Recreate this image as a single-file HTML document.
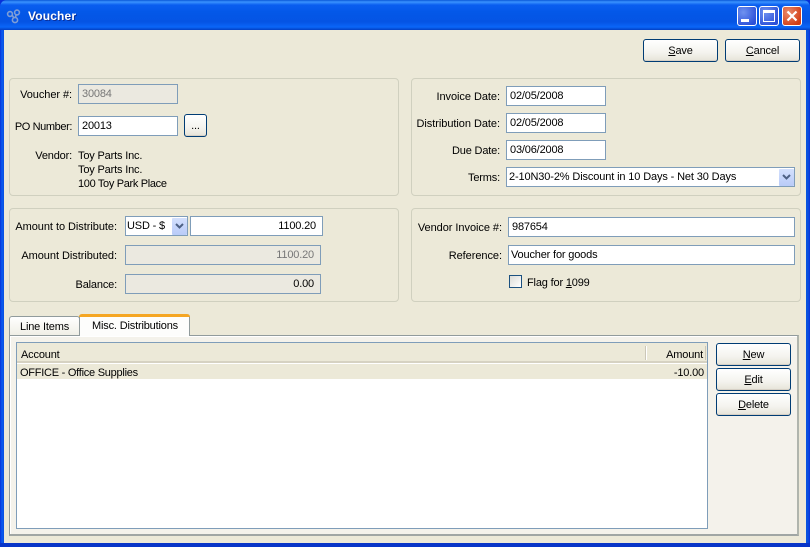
<!DOCTYPE html>
<html>
<head>
<meta charset="utf-8">
<style>
html,body{margin:0;padding:0;width:810px;height:547px;overflow:hidden;background:#0831d9}
*{box-sizing:border-box}
body{font-family:"Liberation Sans",sans-serif;font-size:11px;letter-spacing:-.17px;color:#000;position:relative}
.a{position:absolute}
#win{position:absolute;left:0;top:0;width:810px;height:547px;background:linear-gradient(90deg,#0831d9 0,#0a5cf0 2px,#0a4fe0 4px,#0855dd 806px,#0a4fe0 808px,#0831d9 810px);border-radius:7px 7px 0 0;overflow:hidden}
#title{position:absolute;left:0;top:0;width:810px;height:30px;background:linear-gradient(180deg,#0a58d8 0,#3a93ff 2px,#0a5ef0 5px,#0458e8 12px,#0554e4 22px,#0a66f8 27px,#0340c4 30px)}
#client{position:absolute;left:4px;top:30px;width:802px;height:513px;background:#ece9d8}
#bot{position:absolute;left:0;top:543px;width:810px;height:4px;background:#0835c8}
.t{position:absolute;white-space:nowrap;line-height:13px;height:13px;margin-top:1px}
.r{text-align:right}
.w{letter-spacing:-.05px}
.group{position:absolute;border:1px solid #d0d0bf;border-radius:4px}
.inp{position:absolute;background:#fff;border:1px solid #7f9db9;line-height:19px;height:20px;padding:0 3px;white-space:nowrap}
.dis{background:#ebe9e0;color:#777}
.right{text-align:right;padding-right:6px}
.btn{position:absolute;border:1px solid #003c74;border-radius:3px;background:linear-gradient(180deg,#fff 0,#f4f3ee 60%,#e6e3d8 100%);text-align:center;line-height:23px;box-shadow:inset 0 -1px 0 #d6d0c5}
u{text-decoration:underline}
.arrow{position:absolute;background:linear-gradient(180deg,#d3e0fd,#b9cbf8);border-radius:1px}
.cap{position:absolute;top:6px;width:20px;height:20px;border:1px solid #fff;border-radius:3px;background:radial-gradient(circle at 30% 30%,#6f92f0,#2c50d8 80%)}
</style>
</head>
<body>
<div id="win">
  <div id="title"></div>
  <svg class="a" style="left:6px;top:9px" width="16" height="15" viewBox="0 0 16 15" fill="none" stroke="#7f9ed6" stroke-width="1.6"><circle cx="4" cy="5" r="2.4"/><circle cx="11" cy="3.500" r="2.400"/><circle cx="9" cy="11" r="2.600"/><path d="M6 6l2 3M10 6l-.5 2.500"/></svg>
  <div class="t" style="left:28px;top:9px;color:#fff;font-weight:bold;font-size:12px;letter-spacing:.15px;text-shadow:1px 1px 0 #0a2f9a">Voucher</div>

  <div class="cap" style="left:737px"><div class="a" style="left:3px;top:12px;width:8px;height:3px;background:#fff"></div></div>
  <div class="cap" style="left:759px"><div class="a" style="left:3px;top:3px;width:12px;height:12px;border:1px solid #fff;border-top-width:3px"></div></div>
  <div class="cap" style="left:782px;background:radial-gradient(circle at 30% 30%,#e88a6c,#d33c14 80%)"><svg class="a" style="left:3px;top:3px" width="12" height="12" viewBox="0 0 12 12"><path d="M1.500 1.500l9 9M10.500 1.500l-9 9" stroke="#fff" stroke-width="2.200"/></svg></div>

  <div id="client"></div>
  <div id="bot"></div>

  <div class="btn" style="left:643px;top:39px;width:75px;height:23px"><u>S</u>ave</div>
  <div class="btn" style="left:725px;top:39px;width:75px;height:23px"><u>C</u>ancel</div>

  <div class="group" style="left:9px;top:78px;width:390px;height:118px"></div>
  <div class="group" style="left:411px;top:78px;width:390px;height:118px"></div>
  <div class="group" style="left:9px;top:208px;width:390px;height:94px"></div>
  <div class="group" style="left:411px;top:208px;width:390px;height:94px"></div>

  <div class="t r" style="left:9px;width:63px;top:88px;letter-spacing:-.07px">Voucher #:</div>
  <div class="inp dis" style="left:78px;top:84px;width:100px">30084</div>
  <div class="t r" style="left:9px;width:63px;top:120px;letter-spacing:-.4px">PO Number:</div>
  <div class="inp" style="left:78px;top:116px;width:100px">20013</div>
  <div class="btn" style="left:184px;top:114px;width:23px;height:23px;border-radius:3px;line-height:22px">...</div>
  <div class="t r" style="left:9px;width:63px;top:149px">Vendor:</div>
  <div class="t" style="left:78px;top:149px">Toy Parts Inc.</div>
  <div class="t" style="left:78px;top:163px">Toy Parts Inc.</div>
  <div class="t" style="left:78px;top:177px;letter-spacing:-.33px">100 Toy Park Place</div>

  <div class="t r w" style="left:411px;width:89px;top:90px">Invoice Date:</div>
  <div class="inp" style="left:506px;top:86px;width:100px">02/05/2008</div>
  <div class="t r w" style="left:411px;width:89px;top:117px">Distribution Date:</div>
  <div class="inp" style="left:506px;top:113px;width:100px">02/05/2008</div>
  <div class="t r" style="left:411px;width:89px;top:144px">Due Date:</div>
  <div class="inp" style="left:506px;top:140px;width:100px">03/06/2008</div>
  <div class="t r" style="left:411px;width:89px;top:171px">Terms:</div>
  <div class="inp" style="left:506px;top:167px;width:289px;padding-left:2px;letter-spacing:-.13px">2-10N30-2% Discount in 10 Days - Net 30 Days</div>
  <div class="arrow" style="left:779px;top:169px;width:15px;height:17px"><svg class="a" style="left:3px;top:5px" width="9" height="7" viewBox="0 0 9 7"><path d="M1 1l3.500 3.500L8 1" fill="none" stroke="#4d6185" stroke-width="2"/></svg></div>

  <div class="t r w" style="left:9px;width:108px;top:220px">Amount to Distribute:</div>
  <div class="inp" style="left:125px;top:216px;width:63px;padding-left:1px">USD - $</div>
  <div class="arrow" style="left:172px;top:218px;width:15px;height:17px"><svg class="a" style="left:3px;top:5px" width="9" height="7" viewBox="0 0 9 7"><path d="M1 1l3.500 3.500L8 1" fill="none" stroke="#4d6185" stroke-width="2"/></svg></div>
  <div class="inp right" style="left:190px;top:216px;width:133px">1100.20</div>
  <div class="t r w" style="left:9px;width:108px;top:249px">Amount Distributed:</div>
  <div class="inp dis right" style="left:125px;top:245px;width:196px">1100.20</div>
  <div class="t r" style="left:9px;width:108px;top:278px">Balance:</div>
  <div class="inp dis right" style="left:125px;top:274px;width:196px;color:#000">0.00</div>

  <div class="t r w" style="left:411px;width:91px;top:221px">Vendor Invoice #:</div>
  <div class="inp" style="left:508px;top:217px;width:287px">987654</div>
  <div class="t r w" style="left:411px;width:91px;top:249px">Reference:</div>
  <div class="inp" style="left:508px;top:245px;width:287px;padding-left:2px">Voucher for goods</div>
  <div class="a" style="left:509px;top:275px;width:13px;height:13px;border:1px solid #1c5180;background:linear-gradient(135deg,#dcdcd7,#fff)"></div>
  <div class="t" style="left:527px;top:276px">Flag for <u>1</u>099</div>

  <!-- tabs -->
  <div class="a" style="left:9px;top:335px;width:790px;height:201px;background:#f4f2eb;border:1px solid #919b9c;border-right:2px solid #b0b5ad;border-bottom:2px solid #a0a6a4;box-shadow:inset 1px 1px 0 #fff"></div>
  <div class="a" style="left:9px;top:316px;width:71px;height:19px;border:1px solid #919b9c;border-bottom:none;border-radius:3px 3px 0 0;background:linear-gradient(180deg,#fff,#f0efe6)"></div>
  <div class="t" style="left:20px;top:320px">Line Items</div>
  <div class="a" style="left:79px;top:314px;width:111px;height:22px;border:1px solid #919b9c;border-bottom:none;border-top:none;border-radius:3px 3px 0 0;background:#fdfdfc;z-index:2"><div class="a" style="left:-1px;top:0;width:111px;height:3px;background:#f5a623;border-radius:3px 3px 0 0"></div></div>
  <div class="t" style="left:92px;top:319px;z-index:3">Misc. Distributions</div>

  <!-- table -->
  <div class="a" style="left:16px;top:342px;width:692px;height:187px;background:#fff;border:1px solid #7f9db9"></div>
  <div class="a" style="left:17px;top:343px;width:690px;height:20px;background:#ece9d8;border-bottom:2px solid #d6d2c2"></div>
  <div class="a" style="left:645px;top:346px;width:1px;height:14px;background:#cbc7b8"></div>
  <div class="a" style="left:646px;top:346px;width:1px;height:14px;background:#fff"></div>
  <div class="a" style="left:705px;top:346px;width:1px;height:14px;background:#cbc7b8"></div>
  <div class="t" style="left:21px;top:348px">Account</div>
  <div class="t r" style="left:646px;width:57px;top:348px">Amount</div>
  <div class="a" style="left:17px;top:364px;width:690px;height:15px;background:#ece9d8"></div>
  <div class="t" style="left:20px;top:366px;letter-spacing:-.25px">OFFICE - Office Supplies</div>
  <div class="t r" style="left:646px;width:58px;top:366px">-10.00</div>

  <div class="btn" style="left:716px;top:343px;width:75px;height:23px"><u>N</u>ew</div>
  <div class="btn" style="left:716px;top:368px;width:75px;height:23px"><u>E</u>dit</div>
  <div class="btn" style="left:716px;top:393px;width:75px;height:23px"><u>D</u>elete</div>
</div>
</body>
</html>
